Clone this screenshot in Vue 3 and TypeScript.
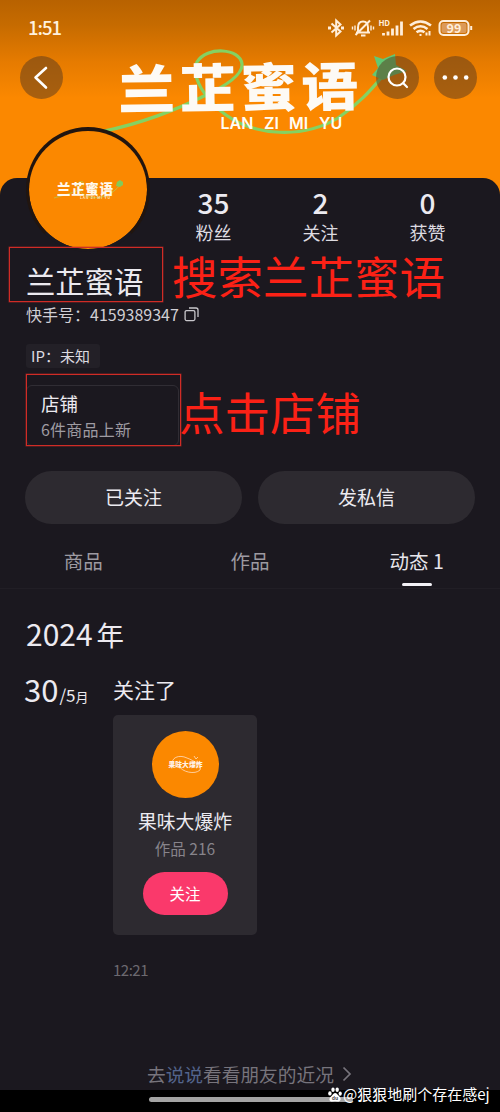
<script setup lang="ts">
interface Stat {
  value: string
  label: string
}

interface Tab {
  label: string
  active: boolean
}

const brand = '兰芷蜜语'

const stats: Stat[] = [
  { value: '35', label: '粉丝' },
  { value: '2', label: '关注' },
  { value: '0', label: '获赞' },
]

const tabs: Tab[] = [
  { label: '商品', active: false },
  { label: '作品', active: false },
  { label: '动态 1', active: true },
]
</script>

<template>
  <div class="screen">
    <header class="hero">
      <svg class="hero-art" viewBox="0 0 500 178" width="500" height="178">
        <path d="M104 131 C140 124 178 109 202 97 C226 86 243 75 242 64 C240 48 207 46 197 62 C190 76 206 101 226 115 C255 136 303 139 338 118 C362 102 374 86 388 70" fill="none" stroke="#84d262" stroke-width="3.2" stroke-linecap="round" />
        <path d="M374 56 L383 59 L395 54 L396 65 L407 71 L394 75 L383 80 L372 75 L378 68 Z" fill="#62c873" />
        <text class="logo-main" x="0" y="0" textLength="240" transform="translate(118.500 109) rotate(-0.8) scale(1 0.92)">{{ brand }}</text>
        <text class="logo-sub" y="129"><tspan x="220.500">LAN</tspan> <tspan x="264">ZI</tspan> <tspan x="289">MI</tspan> <tspan x="319">YU</tspan></text>
      </svg>
      <div class="status">
        <span class="clock">1:51</span>
        <svg class="status-icons" viewBox="0 0 146 22" width="146" height="22" fill="none" stroke="#ffeeda" stroke-width="2">
          <path d="M4.500 6.500 L13.500 14.500 L9.200 18.500 V3.500 L13.500 7.500 L4.500 15.500" />
          <path d="M1 11 h3 M14 11 h3" stroke-width="2.800" />
          <g>
            <path d="M29 15.500 h14 M31 15 V10.500 Q31 4.500 36 4.500 Q41 4.500 41 10.500 V15 M34 18.500 h4.500 M28.500 18 L43 3.500" />
            <path d="M28 8.500 v5 M25.500 9.500 v3 M44 8.500 v5 M46.500 9.500 v3" stroke-width="1.400" />
          </g>
          <text class="hd" x="51.500" y="8.800" textLength="11.500">HD</text>
          <path d="M56.500 18.500 v-2.500 M61 18.500 v-4 M65.500 18.500 v-7 M70 18.500 v-10 M74.500 18.500 v-14" stroke-width="2.800" />
          <path d="M83 8.500 Q93.500 0.500 104 8.500 M86.500 12 Q93.500 6.500 100.500 12 M89.500 15.300 Q93.500 12.500 97.500 15.300" stroke-width="2.600" />
          <path d="M93.500 19 v-2 M99.500 18.500 v-3 M102.500 14 v4.500" stroke-width="2" />
          <rect x="112.500" y="4" width="29" height="14" rx="4" />
          <rect x="114.500" y="6" width="25" height="10" rx="2" fill="#dc9a58" stroke="none" />
          <path d="M144.200 9 v4" stroke-width="2" />
          <text class="battery" x="127" y="15.500" text-anchor="middle">99</text>
        </svg>
      </div>
      <nav class="nav">
        <button class="round" aria-label="返回">
          <svg viewBox="0 0 43 43" width="43" height="43" fill="none" stroke="#fff" stroke-width="2.6" stroke-linecap="round" stroke-linejoin="round">
            <path d="M26 12 L15.500 21.500 L26 31.500" />
          </svg>
        </button>
        <div class="nav-right">
          <button class="round" aria-label="搜索">
            <svg viewBox="0 0 43 43" width="43" height="43" fill="none" stroke="#fff" stroke-width="2.2" stroke-linecap="round">
              <circle cx="21" cy="21" r="8.500" />
              <path d="M27.300 27.300 L31 31" />
            </svg>
          </button>
          <button class="round" aria-label="更多">
            <svg viewBox="0 0 43 43" width="43" height="43" fill="#fff">
              <circle cx="10.800" cy="21.500" r="2.300" />
              <circle cx="21.500" cy="21.500" r="2.300" />
              <circle cx="32.200" cy="21.500" r="2.300" />
            </svg>
          </button>
        </div>
      </nav>
    </header>

    <main class="panel">
      <section class="summary">
        <div class="avatar">
          <svg viewBox="0 0 118 118" width="118" height="118">
            <path d="M25 67 C43 62 58 58 54 51 C46 48 46 61 60 66 C72 69 84 63 91 54" fill="none" stroke="#b9c54d" stroke-width="0.800" />
            <text class="avatar-main" x="28" y="63" textLength="56">{{ brand }}</text>
            <text class="avatar-sub" x="51" y="67.500" textLength="30">LAN ZI MI YU</text>
            <path d="M88 51 L91 49 L94 51 L94 54 L91 56 L87 55 Z" fill="#83ca59" />
          </svg>
        </div>
        <div class="stats">
          <div v-for="s in stats" :key="s.label" class="stat">
            <b>{{ s.value }}</b>
            <span>{{ s.label }}</span>
          </div>
        </div>
      </section>

      <h1 class="name">{{ brand }}</h1>
      <div class="account">
        <span>快手号：4159389347</span>
        <svg viewBox="0 0 15 15" width="15" height="15" fill="none" stroke="#c9c7cc" stroke-width="1.300">
          <rect x="1.100" y="3.600" width="9.800" height="10" rx="1.500" />
          <path d="M5 1 H12 Q14 1 14 3 V10" />
        </svg>
      </div>
      <div class="place">IP：未知</div>
      <div class="shop">
        <span class="shop-title">店铺</span>
        <span class="shop-sub">6件商品上新</span>
      </div>

      <div class="actions">
        <button class="pill">已关注</button>
        <button class="pill">发私信</button>
      </div>

      <div class="tabs">
        <div v-for="t in tabs" :key="t.label" class="tab" :class="{ active: t.active }">{{ t.label }}</div>
      </div>

      <h2 class="year"><span>2024</span>年</h2>
      <div class="entry">
        <div class="date"><b>30</b><span>/5</span><i>月</i></div>
        <div class="event">
          <div class="event-title">关注了</div>
          <article class="card">
            <svg class="card-avatar" viewBox="0 0 67 67" width="67" height="67">
              <circle cx="33.500" cy="33.500" r="33.500" fill="#fb8800" />
              <path d="M21 34 C18 27 27 23 35 27 C43 30 50 35 48 39 C43 44 30 41 27 35 M42 25 l2 3 l2 -2" fill="none" stroke="#ffd5ac" stroke-width="0.900" />
              <text class="card-logo" x="16.500" y="36" textLength="34">果味大爆炸</text>
            </svg>
            <div class="card-name">果味大爆炸</div>
            <div class="card-count">作品 216</div>
            <button class="follow">关注</button>
          </article>
          <div class="time">12:21</div>
        </div>
      </div>

      <div class="more">
        <span>去<em>说说</em>看看朋友的近况</span>
        <svg viewBox="0 0 10 16" width="10" height="16" fill="none" stroke="#77747c" stroke-width="1.700">
          <path d="M1.500 1.500 L8 8 L1.500 14.500" />
        </svg>
      </div>
    </main>

    <footer class="gesture"><span></span></footer>

    <div class="mark-box mark-name"></div>
    <div class="mark-text mark-search">搜索兰芷蜜语</div>
    <div class="mark-box mark-shop"></div>
    <div class="mark-text mark-click">点击店铺</div>
    <div class="watermark">
      <svg viewBox="0 0 14 15" width="14" height="15" fill="#fff">
        <ellipse cx="1.900" cy="6.400" rx="1.700" ry="2.200" />
        <ellipse cx="5" cy="2.700" rx="1.700" ry="2.300" />
        <ellipse cx="9.200" cy="2.700" rx="1.700" ry="2.300" />
        <ellipse cx="12.200" cy="6.600" rx="1.600" ry="2.200" />
        <path d="M7 6 C9 6 9.500 8 11.500 9.500 C14 12 12 15 9.500 14.500 Q7 14 4.500 14.500 C1.500 15 0.500 12 2.500 10 C4.500 8.500 5 6 7 6 Z" />
        <text class="paw-du" x="7" y="13.200" text-anchor="middle">du</text>
      </svg>
      <span>@狠狠地刷个存在感ej</span>
    </div>
  </div>
</template>

<style>
body {
  margin: 0;
  background: #1b181f;
}
</style>

<style scoped>
.screen {
  position: relative;
  display: flex;
  flex-direction: column;
  width: 500px;
  height: 1112px;
  overflow: hidden;
  background: #fb8800;
  color: #eceaf0;
  font-family: "Noto Sans CJK SC", "Noto Sans", sans-serif;
  font-weight: 400;
}
button {
  border: 0;
  padding: 0;
  font: inherit;
  color: inherit;
}
.hero {
  position: relative;
  flex: none;
  height: 178px;
  background: linear-gradient(#b86200 0, #c66b00 25px, #e67b00 62px, #fb8800 98px);
}
.hero-art {
  position: absolute;
  left: 0;
  top: 0;
}
.logo-main {
  font-size: 57px;
  font-weight: 900;
  fill: #fdfaf5;
}
.logo-sub {
  font-family: Inter, "Liberation Sans", sans-serif;
  font-size: 16px;
  font-weight: 600;
  fill: #fffdf5;
}
.status {
  position: relative;
  display: flex;
  justify-content: space-between;
  align-items: center;
  height: 55px;
  padding: 0 28px;
  color: #fff1de;
}
.clock {
  margin-top: -2px;
  font-size: 18.500px;
  font-weight: 500;
  line-height: 30px;
  letter-spacing: -1px;
}
.status-icons {
  margin-right: -1px;
}
.hd,
.battery {
  fill: #ffeeda;
  stroke: none;
  font-weight: 700;
}
.hd {
  font-size: 8px;
}
.battery {
  font-size: 12.500px;
}
.nav {
  position: relative;
  display: flex;
  justify-content: space-between;
  padding: 1px 23px 0 20px;
}
.nav-right {
  display: flex;
  gap: 15px;
}
.round {
  display: block;
  width: 43px;
  height: 43px;
  border-radius: 50%;
  background: rgba(85, 55, 30, 0.5);
}
.round svg {
  display: block;
}
.panel {
  position: relative;
  flex: none;
  box-sizing: border-box;
  height: 912px;
  padding: 0 25px 0 26px;
  border-radius: 17px 17px 0 0;
  background: #1b181f;
}
.summary {
  display: flex;
  height: 80px;
}
.avatar {
  flex: none;
  width: 118px;
  height: 118px;
  margin: -51px 0 0;
  border: solid #21150f;
  border-bottom-color: #1b181f;
  border-width: 4px 3px 3px;
  border-radius: 50%;
  background: #fb8800;
  background-clip: padding-box;
}
.avatar svg {
  display: block;
}
.avatar-main {
  font-size: 13.500px;
  font-weight: 900;
  fill: #fff8ec;
}
.avatar-sub {
  font-size: 3.5px;
  font-weight: 700;
  fill: #ffe6c0;
}
.stats {
  display: flex;
  margin-left: 10px;
}
.stat {
  display: flex;
  flex-direction: column;
  align-items: center;
  width: 107px;
}
.stat b {
  margin-top: 7px;
  font-size: 28px;
  font-weight: 500;
  line-height: 34px;
}
.stat span {
  margin-top: 2px;
  font-size: 18px;
  line-height: 22px;
  color: #dddbe0;
}
.name {
  margin: 4px 0 0;
  font-size: 29.3px;
  font-weight: 400;
  line-height: 36px;
}
.account {
  display: flex;
  align-items: center;
  gap: 5px;
  height: 24px;
  margin-top: 4px;
  font-size: 16px;
  line-height: 24px;
  color: #d1cfd5;
}
.place {
  width: 69px;
  height: 24px;
  margin-top: 18px;
  padding-left: 5px;
  border-radius: 3px;
  background: #232027;
  font-size: 15px;
  line-height: 23px;
  white-space: nowrap;
  color: #dddbe0;
}
.shop {
  display: flex;
  flex-direction: column;
  box-sizing: border-box;
  width: 153px;
  height: 61px;
  margin-top: 17px;
  padding: 4px 0 0 14px;
  border: 1px solid #302d34;
  border-radius: 6px;
}
.shop-title {
  font-size: 18.500px;
  line-height: 26px;
}
.shop-sub {
  font-size: 16px;
  line-height: 26px;
  letter-spacing: 0.200px;
  color: #9e9ba2;
}
.actions {
  display: flex;
  gap: 16px;
  margin: 25px 0 0 -1px;
}
.pill {
  flex: 1;
  height: 53px;
  padding-bottom: 2px;
  border-radius: 27px;
  background: #2d2a30;
  font-size: 19px;
  font-weight: 400;
}
.tabs {
  display: grid;
  grid-template-columns: repeat(3, 1fr);
  height: 64px;
  margin: 0 -25px 0 -26px;
  border-bottom: 1px solid #211e25;
}
.tab {
  position: relative;
  height: 64px;
  font-size: 19.5px;
  line-height: 74px;
  text-align: center;
  color: #9d9aa1;
}
.tab.active {
  color: #e8e6ec;
}
.tab.active::after {
  content: "";
  position: absolute;
  left: 50%;
  bottom: 2px;
  width: 30px;
  height: 3px;
  margin-left: -15px;
  border-radius: 2px;
  background: #f4f2f7;
}
.year {
  margin: 24px 0 0;
  font-size: 27.5px;
  font-weight: 400;
  line-height: 40px;
}
.year span {
  margin-right: 4px;
  font-size: 30px;
}
.entry {
  display: flex;
  margin-top: 16px;
}
.date {
  display: flex;
  align-items: baseline;
  flex: none;
  width: 89px;
  margin-left: -2px;
  height: 38px;
  line-height: 38px;
}
.date b {
  font-size: 31px;
  font-weight: 400;
}
.date span {
  margin-left: 1px;
  font-size: 17px;
}
.date i {
  font-size: 13px;
  font-style: normal;
}
.event-title {
  font-size: 21px;
  line-height: 38px;
  height: 45px;
}
.card {
  display: flex;
  flex-direction: column;
  align-items: center;
  box-sizing: border-box;
  width: 144px;
  height: 220px;
  padding-top: 16px;
  border-radius: 5px;
  background: #2d2a30;
}
.card-avatar {
  flex: none;
}
.card-logo {
  font-size: 6.800px;
  font-weight: 900;
  fill: #fff0e5;
}
.card-name {
  margin-top: 9px;
  font-size: 18.800px;
  line-height: 28px;
}
.card-count {
  font-size: 15.500px;
  line-height: 26px;
  color: #87848b;
}
.follow {
  width: 85px;
  height: 43px;
  margin-top: 11px;
  padding-bottom: 2px;
  border-radius: 22px;
  background: #fa396b;
  color: #fff;
  font-size: 15.500px;
  font-weight: 400;
}
.time {
  margin-top: 24px;
  font-size: 15px;
  line-height: 22px;
  letter-spacing: -0.500px;
  color: #6c6970;
}
.more {
  display: flex;
  align-items: center;
  gap: 8px;
  margin: 78px 0 0 121px;
  font-size: 18.700px;
  line-height: 30px;
  color: #77747c;
}
.more em {
  font-style: normal;
  color: #53648c;
}
.gesture {
  flex: none;
  height: 22px;
  background: #000;
}
.gesture span {
  display: block;
  width: 204px;
  height: 5px;
  margin: 7px 0 0 149px;
  border-radius: 3px;
  background: #a4a4a4;
}
.mark-box {
  position: absolute;
  box-sizing: border-box;
  border: 1px solid #d02c26;
  box-shadow: 0 0 0 0.500px rgba(190, 40, 36, 0.6);
}
.mark-name {
  left: 9px;
  top: 247px;
  width: 154px;
  height: 55px;
}
.mark-shop {
  left: 26px;
  top: 374px;
  width: 155px;
  height: 72px;
}
.mark-text {
  position: absolute;
  font-size: 45.500px;
  line-height: 46px;
  white-space: nowrap;
  color: #fb2116;
}
.mark-search {
  left: 172px;
  top: 252px;
}
.mark-click {
  left: 179px;
  top: 388px;
}
.watermark {
  position: absolute;
  left: 328px;
  top: 1082px;
  display: flex;
  align-items: center;
  gap: 1px;
  font-size: 15px;
  line-height: 24px;
  white-space: nowrap;
  color: #fff;
}
.paw-du {
  font-size: 5px;
  font-weight: 700;
  fill: #444;
}
</style>
